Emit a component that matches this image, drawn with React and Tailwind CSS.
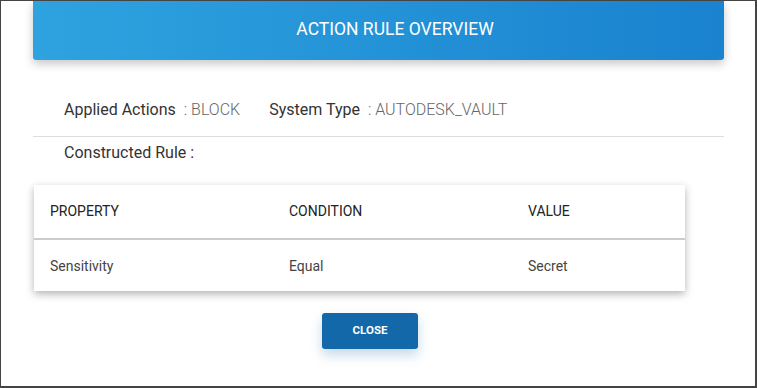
export default function App() {
  const font = { fontFamily: "Roboto, 'Liberation Sans', sans-serif" };
  return (
    <div
      className="w-[757px] h-[388px] bg-white border-l border-t border-r-2 border-b-2 border-[#444] overflow-hidden"
      style={font}
    >
      <div className="flex flex-col">
        <div className="ml-[32px] w-[691px] h-[59px] rounded-b-[3px] bg-gradient-to-r from-[#2ea3df] to-[#1a82cf] shadow-[0_4px_10px_rgba(0,0,0,0.22)] flex items-center justify-center pl-[33px] pb-[3px]">
          <span className="text-white text-[17.5px]">ACTION RULE OVERVIEW</span>
        </div>

        <div className="flex items-center h-[20px] mt-[40px] pl-[63px] text-[16px] leading-[20px]">
          <span className="text-[#333]">Applied Actions</span>
          <span className="ml-[8px] text-[#666] font-light">: BLOCK</span>
          <span className="ml-[29px] text-[#333]">System Type</span>
          <span className="ml-[8px] text-[#666] font-light">: AUTODESK_VAULT</span>
        </div>

        <div className="ml-[32px] w-[691px] h-px bg-[#ddd] mt-[16px]" />

        <div className="pl-[63px] mt-[6px] h-[20px] leading-[20px] text-[16px] text-[#333]">
          Constructed Rule :
        </div>

        <div className="ml-[33px] w-[651px] mt-[22px] bg-white shadow-[0_3px_8px_rgba(0,0,0,0.3)]">
          <div className="grid grid-cols-[239px_239px_1fr] h-[55px] items-center pl-[16px] text-[14px] text-[#222] border-b-2 border-[#ccc]">
            <span>PROPERTY</span>
            <span>CONDITION</span>
            <span>VALUE</span>
          </div>
          <div className="grid grid-cols-[239px_239px_1fr] h-[51px] items-center pl-[16px] pt-[1px] text-[14px] text-[#444]">
            <span>Sensitivity</span>
            <span>Equal</span>
            <span>Secret</span>
          </div>
        </div>

        <div className="flex justify-center mt-[22px] pr-[16px]">
          <button className="w-[96px] h-[36px] rounded-[3px] bg-[#1268a8] text-white text-[11.5px] font-bold shadow-[0_6px_12px_rgba(18,104,168,0.25)]">
            CLOSE
          </button>
        </div>
      </div>
    </div>
  );
}
